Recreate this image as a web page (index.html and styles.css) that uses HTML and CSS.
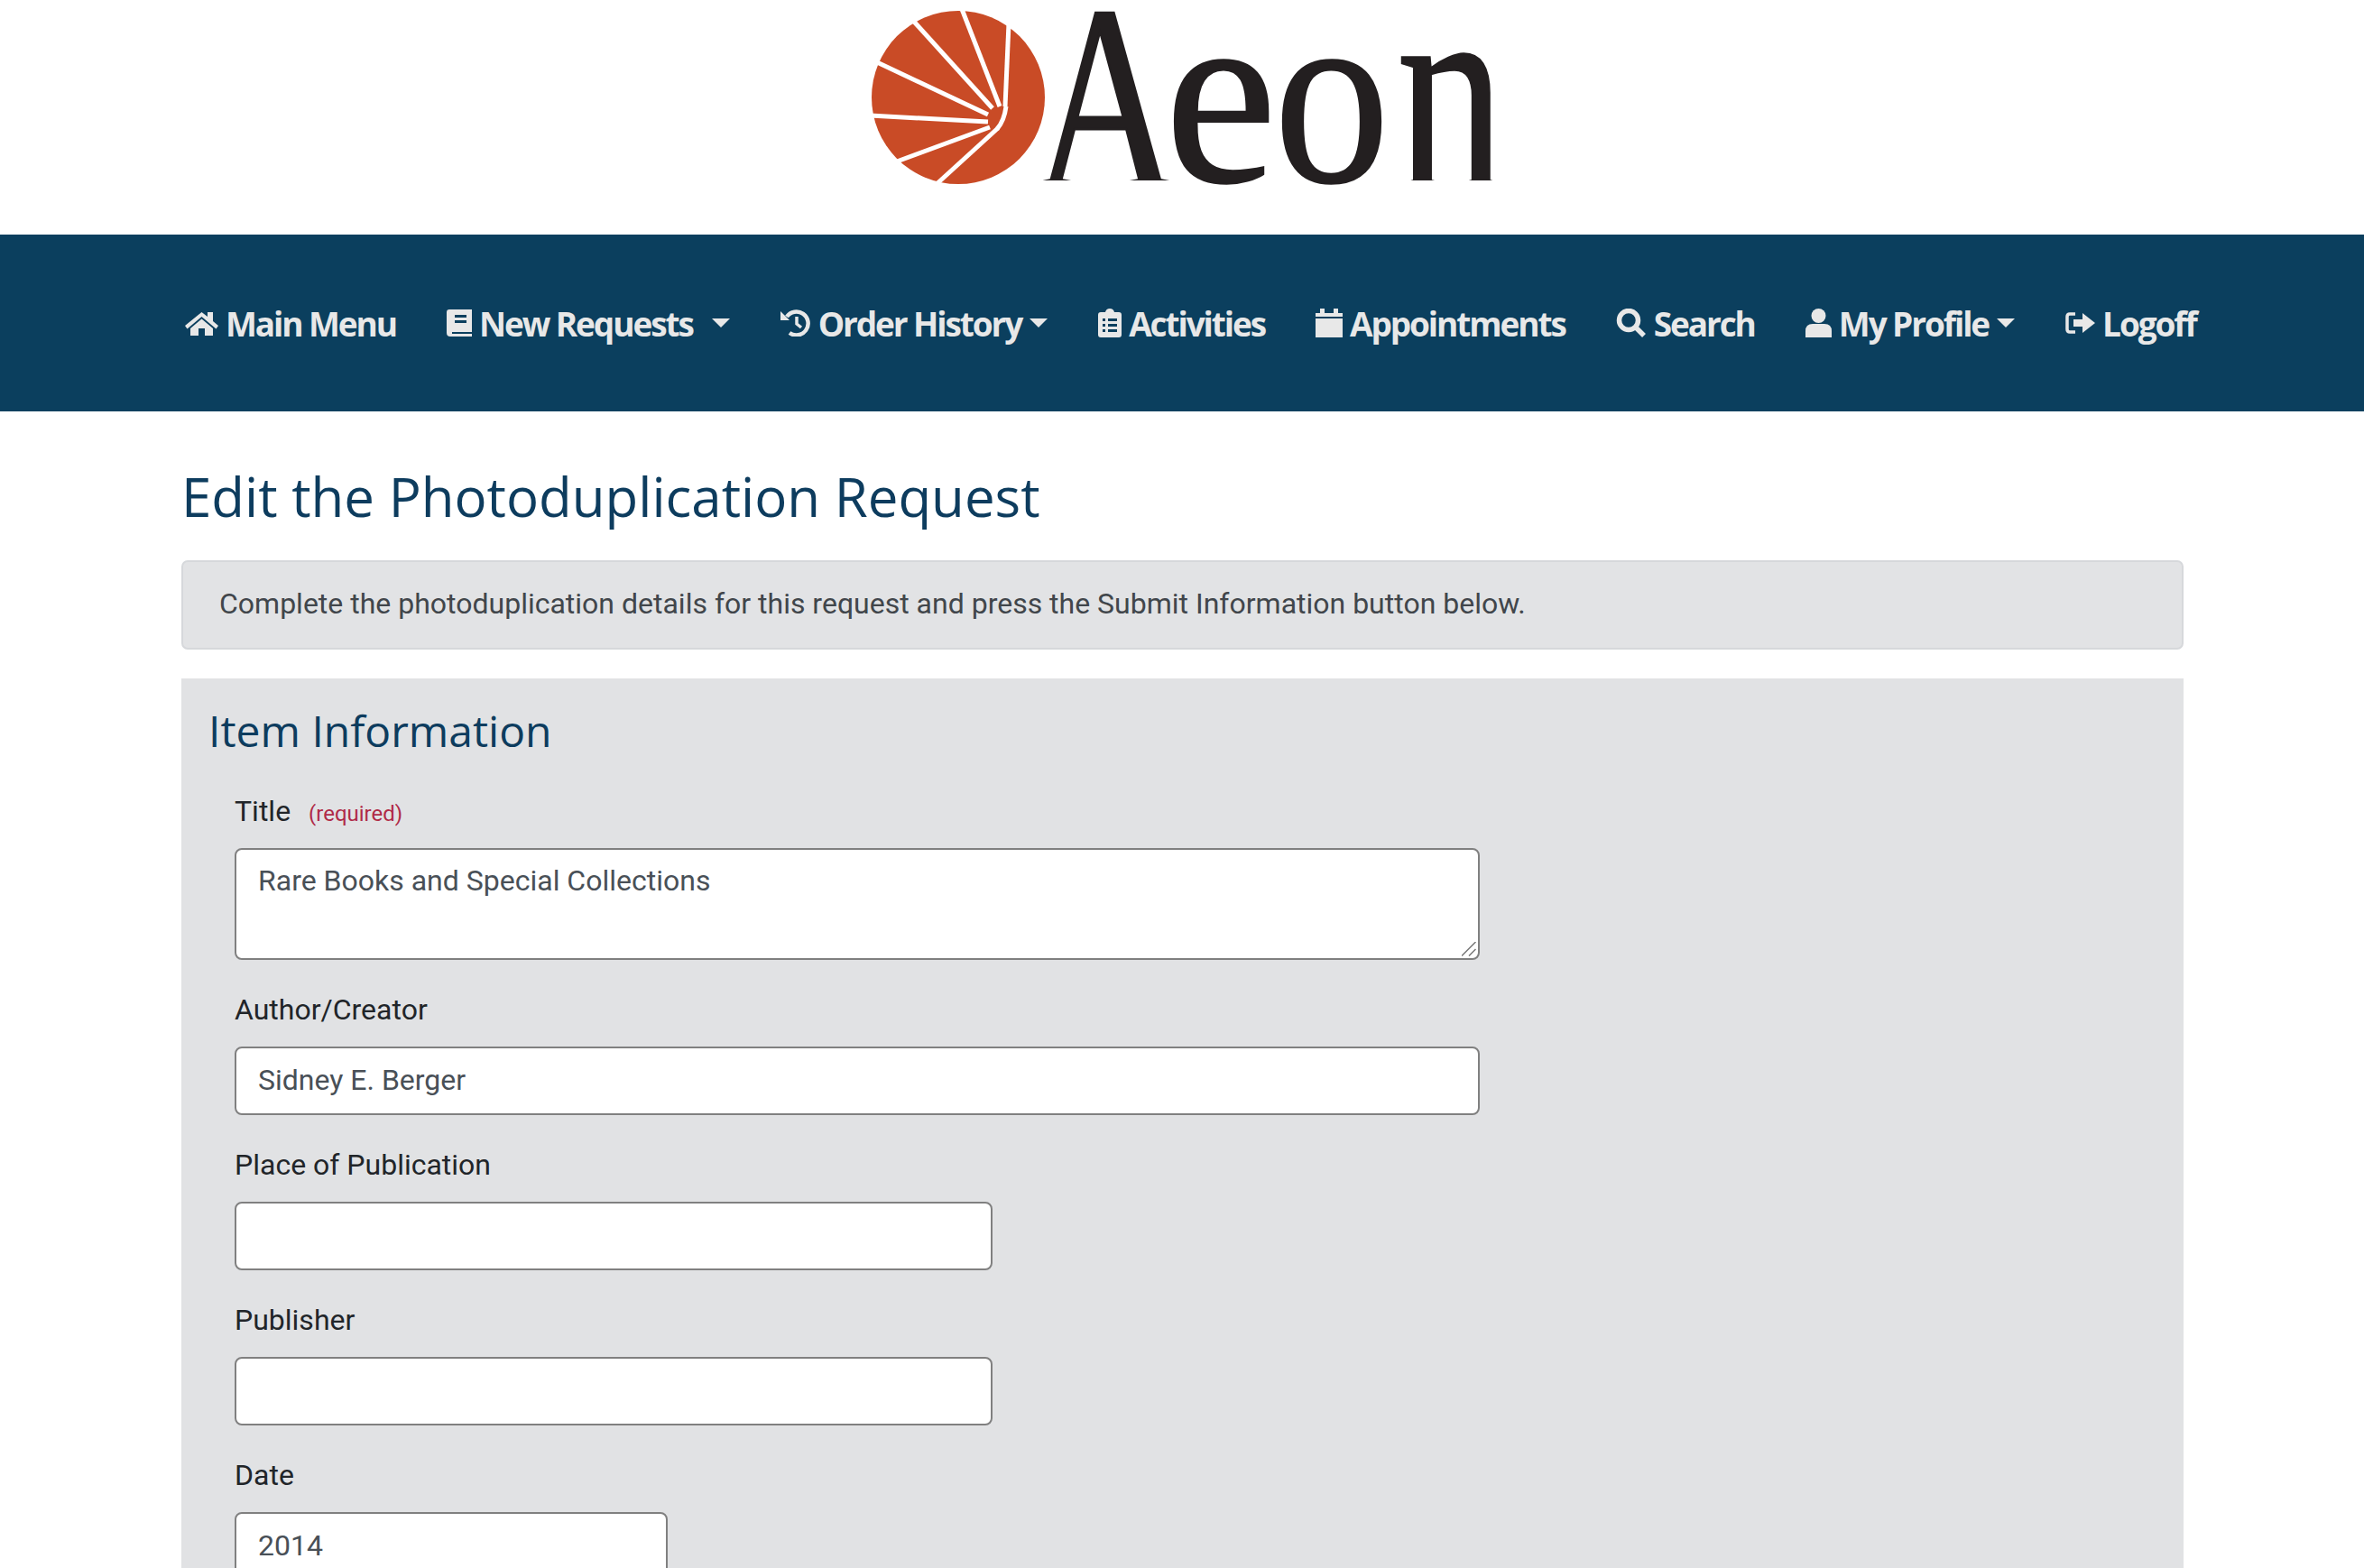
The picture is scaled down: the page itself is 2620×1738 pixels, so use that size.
FILE: index.html
```html
<!DOCTYPE html>
<html lang="en">
<head>
<meta charset="utf-8">
<title>Aeon - Edit the Photoduplication Request</title>
<link rel="stylesheet" href="styles.css">
</head>
<body>
<div class="page">
<header class="brand">
  <svg class="logo" viewBox="960 0 700 220" role="img" aria-label="Aeon">
    <defs><clipPath id="feet"><rect x="960" y="0" width="700" height="200"/></clipPath></defs>
    <circle class="logo-disc" cx="1062" cy="108" r="96"/>
    <g class="logo-rays">
      <line x1="1066" y1="10" x2="1108" y2="118"/>
      <line x1="1118" y1="26" x2="1114" y2="118"/>
      <line x1="1013" y1="24" x2="1100" y2="120"/>
      <line x1="972" y1="69" x2="1095" y2="127"/>
      <line x1="964" y1="128" x2="1095" y2="135"/>
      <line x1="994" y1="179" x2="1097" y2="141"/>
      <line x1="1038" y1="204" x2="1106" y2="142"/>
      <path d="M1115 118 Q1113 134 1105 143"/>
    </g>
    <g clip-path="url(#feet)">
      <text class="logo-letter logo-a" x="1146" y="211" textLength="160" lengthAdjust="spacingAndGlyphs">A</text>
      <text class="logo-letter logo-n" x="1548" y="211" textLength="120" lengthAdjust="spacingAndGlyphs">n</text>
    </g>
    <text class="logo-letter logo-eo" x="1291" y="201" textLength="124" lengthAdjust="spacingAndGlyphs">e</text>
    <text class="logo-letter logo-eo" x="1412" y="201" textLength="128" lengthAdjust="spacingAndGlyphs">o</text>
  </svg>
</header>
<nav class="nav">
  <a class="nav-item"><svg class="ico ico-home" viewBox="0 0 37 28"><path d="M18.500 2 L0 17 L2.500 20.500 L18.500 7 L34.500 20.500 L37 17 L31 12 V2 H25 V7 Z"/><path d="M18.500 9.500 L6 20 V28 H15 V20 H22 V28 H31 V20 Z"/></svg><span>Main Menu</span></a>
  <a class="nav-item"><svg class="ico ico-book" viewBox="0 0 28 30"><path fill-rule="evenodd" d="M3 0 H28 V25 H6 V27 H28 V30 H4 Q0 30 0 26 V3 Q0 0 3 0 Z M9 6 V9 H22 V6 Z M9 12 V15 H22 V12 Z"/></svg><span>New Requests</span><i class="caret caret-wide"></i></a>
  <a class="nav-item"><svg class="ico ico-history" viewBox="0 0 34 30"><path class="stroke" d="M7 8 A13 13 0 1 1 10 26"/><path d="M0 2 L10 12 H0 Z"/><path class="stroke thin" d="M18 8 V16 L23 20"/></svg><span>Order History</span><i class="caret"></i></a>
  <a class="nav-item"><svg class="ico ico-clip" viewBox="0 0 26 32"><path fill-rule="evenodd" d="M3 4 H8 Q9 0 13 0 Q17 0 18 4 H23 Q26 4 26 7 V29 Q26 32 23 32 H3 Q0 32 0 29 V7 Q0 4 3 4 Z M5 11 V14 H8 V11 Z M11 11 V14 H21 V11 Z M5 17 V20 H8 V17 Z M11 17 V20 H21 V17 Z M5 23 V26 H8 V23 Z M11 23 V26 H21 V23 Z"/></svg><span>Activities</span></a>
  <a class="nav-item"><svg class="ico ico-cal" viewBox="0 0 30 32"><path d="M5 0 H10 V6 H5 Z M20 0 H25 V6 H20 Z"/><path d="M0 5 H30 V9 H0 Z"/><path d="M0 11 H30 V32 H0 Z"/></svg><span>Appointments</span></a>
  <a class="nav-item"><svg class="ico ico-search" viewBox="0 0 34 32"><circle class="stroke heavy" cx="14" cy="13" r="10.500"/><path class="stroke heavy" d="M22 21 L31 30"/></svg><span>Search</span></a>
  <a class="nav-item"><svg class="ico ico-user" viewBox="0 0 29 32"><circle cx="14.500" cy="8" r="8"/><path d="M0 32 V25 Q0 17 8 17 H21 Q29 17 29 25 V32 Z"/></svg><span>My Profile</span><i class="caret"></i></a>
  <a class="nav-item"><svg class="ico ico-logoff" viewBox="0 0 33 26"><path class="stroke thin" d="M11 3 H5 Q2 3 2 6 V20 Q2 23 5 23 H11"/><path d="M9 9 H19 V2 L33 13 L19 24 V17 H9 Z"/></svg><span>Logoff</span></a>
</nav>
<main class="content">
  <h1 class="title">Edit the Photoduplication Request</h1>
  <p class="alert">Complete the photoduplication details for this request and press the Submit Information button below.</p>
  <section class="panel">
    <h2 class="panel-title">Item Information</h2>
    <div class="field">
      <label class="label" for="title">Title <small class="req">(required)</small></label>
      <div class="area-wrap">
        <textarea class="control control-full area" id="title">Rare Books and Special Collections</textarea>
        <svg class="grip" viewBox="0 0 16 16"><path d="M0 15.500 L15.500 0 M8 15.500 L15.500 8"/></svg>
      </div>
    </div>
    <div class="field">
      <label class="label" for="author">Author/Creator</label>
      <input class="control control-full" id="author" value="Sidney E. Berger">
    </div>
    <div class="field">
      <label class="label" for="place">Place of Publication</label>
      <input class="control control-mid" id="place">
    </div>
    <div class="field">
      <label class="label" for="publisher">Publisher</label>
      <input class="control control-mid" id="publisher">
    </div>
    <div class="field">
      <label class="label" for="date">Date</label>
      <input class="control control-small" id="date" value="2014">
    </div>
  </section>
</main>
</div>
</body>
</html>
```
FILE: styles.css
```css
* { box-sizing: border-box; }
html, body { margin: 0; padding: 0; background: #fff; }
.page { height: 100vh; overflow: hidden; font-family: Roboto, "Liberation Sans", sans-serif; color: #212529; }

.brand { height: 260px; display: flex; justify-content: center; }
.logo { width: 700px; height: 220px; }
.logo-disc { fill: #c94b26; }
.logo-rays line, .logo-rays path { stroke: #fff; stroke-width: 5; fill: none; }
.logo-letter { font-family: "Liberation Serif", serif; fill: #231f20; stroke: #231f20; stroke-width: 2px; }
.logo-a { font-size: 298px; stroke-width: 3px; }
.logo-eo { font-size: 286px; }
.logo-n { font-size: 322px; }

.nav { height: 196px; background: #0b3f5e; display: flex; align-items: center; gap: 56px; padding-left: 205px; }
.nav-item { display: flex; align-items: center; gap: 8px; color: #e8e8e8; font-family: "Open Sans", sans-serif; font-weight: 700; font-size: 37px; letter-spacing: -2.100px; white-space: nowrap; }
.ico { fill: #e8e8e8; display: block; flex: none; }
.ico .stroke { fill: none; stroke: #e8e8e8; stroke-width: 4.500; }
.ico .thin { stroke-width: 3.500; }
.ico .heavy { stroke-width: 5.500; }
.ico-home { width: 37px; height: 28px; }
.ico-book { width: 28px; height: 30px; }
.ico-history { width: 34px; height: 30px; }
.ico-clip { width: 26px; height: 32px; }
.ico-cal { width: 30px; height: 32px; }
.ico-search { width: 34px; height: 32px; }
.ico-user { width: 29px; height: 32px; }
.ico-logoff { width: 33px; height: 26px; }
.caret { width: 0; height: 0; border-left: 10px solid transparent; border-right: 10px solid transparent; border-top: 10px solid #e8e8e8; margin-left: 1px; }
.caret-wide { margin-left: 13px; }

.content { margin: 0 200px 0 201px; }
.title { margin: 0; padding-top: 54px; font-family: "Open Sans", sans-serif; font-weight: 400; font-size: 60px; line-height: 80px; color: #0d3c5e; }
.alert { margin: 31px 0 0; height: 99px; padding: 0 40px 4px; display: flex; align-items: center; background: #e2e3e5; border: 2px solid #d6d8db; border-radius: 7px; font-size: 32px; color: #41464b; }
.panel { margin-top: 32px; min-height: 1200px; padding: 24px 30px; background: #e1e2e4; }
.panel-title { margin: 0 0 31px; font-family: "Open Sans", sans-serif; font-weight: 400; font-size: 48px; line-height: 68px; color: #0d3c5e; }
.field { margin: 0 0 31px 29px; }
.label { display: block; height: 48px; line-height: 48px; margin-bottom: 17px; font-size: 32px; color: #212529; }
.req { margin-left: 12px; font-size: 24px; color: #b02a47; }
.control { display: block; height: 76px; padding: 0 24px 2px; background: #fff; border: 2px solid #808080; border-radius: 8px; font-family: Roboto, sans-serif; font-size: 32px; color: #495057; outline: none; }
.control-full { width: 1380px; }
.control-mid { width: 840px; }
.control-small { width: 480px; }
.area-wrap { position: relative; width: 1380px; }
.area { height: 124px; padding: 12px 24px; resize: none; line-height: 1.4; overflow: hidden; }
.grip { position: absolute; right: 4px; bottom: 4px; width: 16px; height: 16px; fill: none; stroke: #777; stroke-width: 1.500; }
```
